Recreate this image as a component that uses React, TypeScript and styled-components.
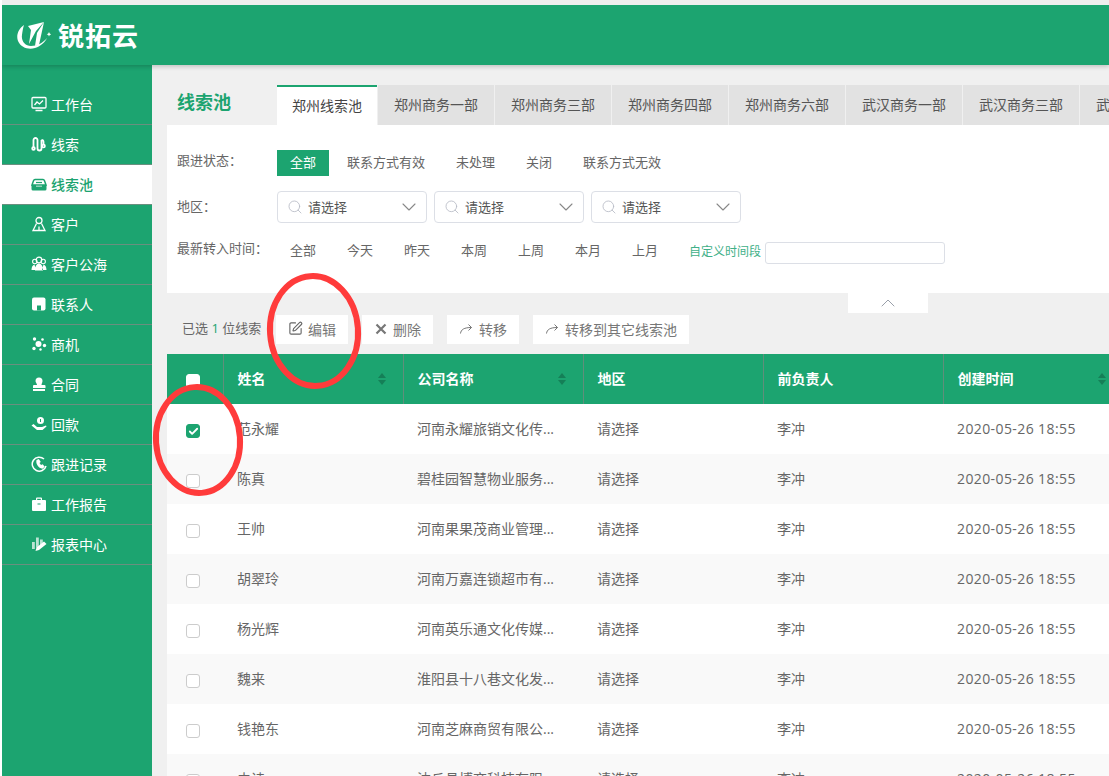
import React from "react";
import styled, { createGlobalStyle } from "styled-components";
import { Search, ChevronDown, ChevronUp, SquarePen, Check } from "lucide-react";

const GREEN = "#1ca470";
const FONT = `"Open Sans", "Noto Sans CJK SC", sans-serif`;

const GlobalStyle = createGlobalStyle`
    html, body {
        margin: 0;
        padding: 0;
        height: 100%;
        overflow: hidden;
        background: #fff;
    }
    body {
        font-family: ${FONT};
        font-size: 14px;
        color: #666;
    }
    * {
        box-sizing: border-box;
    }
`;

const TopStrip = styled.div`
    height: 5px;
    margin-left: 2px;
    background: #eeeeee;
`;

const Page = styled.div`
    position: relative;
    width: 1107px;
    height: 771px;
    margin-left: 2px;
    display: flex;
    flex-direction: column;
    overflow: hidden;
`;

const Header = styled.header`
    flex: 0 0 60px;
    display: flex;
    align-items: center;
    padding-left: 15px;
    background: ${GREEN};
    box-shadow: 0 2px 4px rgba(0, 0, 0, 0.18);
    position: relative;
    z-index: 2;
`;

const LogoText = styled.span`
    margin-left: 7px;
    font-family: "Noto Sans CJK SC", sans-serif;
    font-size: 26px;
    font-weight: 700;
    letter-spacing: 1px;
    line-height: 30px;
    color: #fff;
`;

const Body = styled.div`
    flex: 1;
    display: flex;
    min-height: 0;
`;

const Sidebar = styled.nav`
    flex: 0 0 150px;
    padding-top: 20px;
    background: ${GREEN};
`;

const NavItem = styled.div<{ $active?: boolean }>`
    height: 40px;
    display: flex;
    align-items: center;
    gap: 4px;
    padding: 0 0 2px 29px;
    border-bottom: 1px solid #6a8f7f;
    font-size: 14px;
    color: ${(p) => (p.$active ? GREEN : "#fff")};
    background: ${(p) => (p.$active ? "#fff" : "transparent")};
    font-weight: ${(p) => (p.$active ? 500 : 400)};

    svg {
        flex: 0 0 16px;
    }
`;

const Main = styled.main`
    flex: 1;
    min-width: 0;
    padding: 20px 0 0 15px;
    background: #f0f0f0;
    overflow: hidden;
`;

const TitleRow = styled.div`
    height: 40px;
    display: flex;
`;

const Title = styled.h1`
    flex: 0 0 110px;
    margin: 0;
    padding-left: 10px;
    font-size: 18px;
    font-weight: 700;
    line-height: 34px;
    color: ${GREEN};
`;

const Tabs = styled.div`
    display: flex;
    gap: 1px;
    overflow: hidden;
    flex: 1;
`;

const Tab = styled.div<{ $active?: boolean }>`
    flex: 0 0 ${(p) => (p.$active ? "100px" : "116px")};
    text-align: center;
    white-space: nowrap;
    font-size: 14px;
    line-height: ${(p) => (p.$active ? "38px" : "40px")};
    color: ${(p) => (p.$active ? "#444" : "#555")};
    background: ${(p) => (p.$active ? "#fff" : "#e2e2e2")};
    border-top: ${(p) => (p.$active ? `2px solid ${GREEN}` : "none")};
`;

const FilterPanel = styled.section`
    height: 168px;
    padding: 25px 10px 0;
    background: #fff;
`;

const FilterRow = styled.div<{ $gap: number }>`
    display: flex;
    align-items: flex-start;
    margin-bottom: ${(p) => p.$gap}px;
`;

const FilterLabel = styled.div<{ $lh: number }>`
    flex: 0 0 100px;
    font-size: 13px;
    line-height: ${(p) => p.$lh - 2}px;
    color: #666;
    white-space: nowrap;
`;

const Options = styled.div`
    display: flex;
    gap: 5px;
`;

const Option = styled.div<{ $active?: boolean; $h: number }>`
    padding: 0 13px;
    height: ${(p) => p.$h}px;
    line-height: ${(p) => p.$h - 2}px;
    font-size: 13px;
    white-space: nowrap;
    color: ${(p) => (p.$active ? "#fff" : "#666")};
    background: ${(p) => (p.$active ? GREEN : "transparent")};
`;

const Selects = styled.div`
    display: flex;
    gap: 7px;
`;

const SelectBox = styled.div`
    width: 150px;
    height: 32px;
    display: flex;
    align-items: center;
    padding: 0 5px 0 9px;
    border: 1px solid #dcdfe6;
    border-radius: 4px;
    font-size: 13px;
    color: #555;

    span {
        flex: 1;
        margin: 0 0 2px 5px;
    }
`;

const CustomLabel = styled.span`
    margin-left: 18px;
    font-size: 12px;
    line-height: 20px;
    color: #3fb088;
    white-space: nowrap;
`;

const CustomInput = styled.div`
    width: 180px;
    height: 22px;
    margin-left: 4px;
    border: 1px solid #dcdfe6;
    border-radius: 3px;
    background: #fff;
`;

const CollapseTab = styled.div`
    width: 80px;
    height: 20px;
    margin-left: 681px;
    display: flex;
    align-items: center;
    justify-content: center;
    background: #fff;
`;

const Toolbar = styled.div`
    height: 29px;
    margin: 2px 0 10px;
    padding-left: 15px;
    display: flex;
    align-items: center;
    font-size: 13px;
    color: #666;

    em {
        font-style: normal;
        color: ${GREEN};
    }
`;

const SelectedInfo = styled.span`
    width: 94px;
    white-space: nowrap;
    margin-top: -5px;
`;

const ToolButtons = styled.div`
    display: flex;
    gap: 14px;
`;

const ToolButton = styled.div`
    height: 29px;
    display: flex;
    align-items: center;
    gap: 5px;
    padding: 0 12px 2px 12px;
    background: #fff;
    font-size: 14px;
    color: #777;
    white-space: nowrap;
`;

const Table = styled.table`
    width: 956px;
    table-layout: fixed;
    border-collapse: collapse;
`;

const HeadCell = styled.th`
    height: 50px;
    padding: 0 14px 2px;
    background: ${GREEN};
    border-left: 1px solid #5f8f7b;
    text-align: left;
    font-size: 14px;
    font-weight: 700;
    color: #fff;

    &:first-child {
        border-left: none;
    }
`;

const HeadInner = styled.div`
    display: flex;
    align-items: center;
    justify-content: space-between;
    padding-right: 3px;
`;

const SortMark = styled.i`
    display: flex;
    flex-direction: column;
    gap: 2px;
    margin-top: 2px;

    &::before,
    &::after {
        content: "";
        width: 0;
        height: 0;
        border-left: 4px solid transparent;
        border-right: 4px solid transparent;
    }
    &::before {
        border-bottom: 5px solid #157f57;
    }
    &::after {
        border-top: 5px solid #157f57;
    }
`;

const Row = styled.tr<{ $odd: boolean }>`
    background: ${(p) => (p.$odd ? "#fff" : "#f9f9f9")};
`;

const Cell = styled.td`
    height: 50px;
    padding: 0 14px 2px;
    font-size: 14px;
    color: #666;
    white-space: nowrap;
    overflow: hidden;
`;

const DateCell = styled(Cell)`
    letter-spacing: 0.4px;
`;

const CheckCell = styled(Cell)`
    padding: 4px 0 0 19px;
`;

const CheckBox = styled.span<{ $checked?: boolean; $head?: boolean }>`
    width: 14px;
    height: 14px;
    display: flex;
    align-items: center;
    justify-content: center;
    border-radius: 3px;
    border: 1px solid ${(p) => (p.$checked ? GREEN : p.$head ? "#fff" : "#ccc")};
    background: ${(p) => (p.$checked ? GREEN : "#fff")};
`;

const HeadCheck = styled(CheckBox)`
    margin: 5px 0 0 5px;
`;

const Circle = styled.svg`
    position: absolute;
    left: -2px;
    top: -5px;
    width: 1109px;
    height: 776px;
    pointer-events: none;
    z-index: 3;
`;

const icons: Record<string, React.ReactNode> = {
    monitor: (
        <g fill="none" stroke="currentColor" strokeWidth="1.3">
            <rect x="1" y="1.500" width="14" height="10.500" rx="1" />
            <path d="M3.500 9l2.500-3 2.500 2 3.500-3.500M4.500 14.500h7" />
        </g>
    ),
    clue: (
        <g fill="none" stroke="currentColor" strokeWidth="1.800">
            <path d="M2.500 11V4a2 2 0 0 1 4 0v8.500a2 2 0 0 0 4 0V4" />
            <circle cx="2.500" cy="12.500" r="1.300" />
            <circle cx="12.500" cy="10" r="1.400" />
            <path d="M10.500 4a2 2 0 0 1 2 2v2.500" />
        </g>
    ),
    pool: (
        <g>
            <path d="M4 3.500h8a1.500 1.500 0 0 1 1.400 1L15 9H1l1.600-4.500A1.500 1.500 0 0 1 4 3.500z" fill="none" stroke="currentColor" strokeWidth="1.500" />
            <path d="M.5 9h4.500v1.500h6V9h4.500v4a1.500 1.500 0 0 1-1.500 1.500H2A1.500 1.500 0 0 1 .5 13z" fill="currentColor" />
            <path d="M5 6.500h6" stroke="currentColor" strokeWidth="1.200" />
        </g>
    ),
    customer: (
        <g fill="none" stroke="currentColor" strokeWidth="1.300">
            <circle cx="8" cy="4.500" r="3" />
            <path d="M5.500 7.500L2 14.500h12l-3.500-7M8 10.500v4" />
        </g>
    ),
    pub: (
        <g>
            <circle cx="3.800" cy="5.500" r="2.200" fill="none" stroke="currentColor" strokeWidth="1.100" />
            <circle cx="12.200" cy="5.500" r="2.200" fill="none" stroke="currentColor" strokeWidth="1.100" />
            <circle cx="8" cy="4" r="2.800" fill="none" stroke="currentColor" strokeWidth="1.200" />
            <path d="M.5 14c0-3 1.200-5 3-5.500L5 14zM15.500 14c0-3-1.200-5-3-5.500L11 14zM4 14.500c0-4 1.500-7 4-7s4 3 4 7z" fill="currentColor" />
        </g>
    ),
    contact: (
        <g>
            <rect x="1" y="1.500" width="13.500" height="13" rx="2" fill="currentColor" />
            <rect x="6" y="9.500" width="4" height="5" fill={GREEN} />
        </g>
    ),
    chance: (
        <g fill="currentColor">
            <circle cx="7.500" cy="8" r="3" />
            <circle cx="3.500" cy="3" r="1.700" />
            <circle cx="11.500" cy="3.500" r="1.300" />
            <circle cx="3" cy="12.500" r="1.700" />
            <circle cx="13.500" cy="9.500" r="1.700" />
            <circle cx="9.500" cy="13.500" r="1.200" />
        </g>
    ),
    contract: (
        <g fill="currentColor">
            <path d="M4.500 5a3.500 3.500 0 0 1 7 0c0 1.500-1 2.500-1 4h3a1 1 0 0 1 1 1v2H2v-2a1 1 0 0 1 1-1h3c0-1.500-1.500-2.500-1.500-4z" />
            <rect x="2" y="13" width="12" height="2" />
        </g>
    ),
    payment: (
        <g>
            <circle cx="9.500" cy="4.500" r="3.500" fill="currentColor" />
            <path d="M.5 9.500l2-1.500 3.500 3h5l4-1.500.5 1-4 3.500H6z" fill="currentColor" />
            <path d="M9.500 3v3" stroke={GREEN} strokeWidth="1" />
        </g>
    ),
    record: (
        <g>
            <path d="M13 3A7 7 0 1 0 15 10" fill="none" stroke="currentColor" strokeWidth="1.500" />
            <path d="M5.500 4l2.300-1 2 3-1.300 1 1.500 2 1.700-.7 2 2.500-2.300 2C7.500 12 4.500 8 5.500 4z" fill="currentColor" />
        </g>
    ),
    report: (
        <g fill="currentColor">
            <path d="M5 4V2.500A1 1 0 0 1 6 1.500h4a1 1 0 0 1 1 1V4h-1.200V2.800H6.200V4z" />
            <rect x="1" y="4" width="14" height="11" rx="1" />
            <rect x="6.500" y="7.500" width="3" height="1" fill={GREEN} />
        </g>
    ),
    charts: (
        <g fill="currentColor">
            <rect x="1" y="6" width="2.800" height="7" opacity=".7" />
            <rect x="5" y="1.500" width="2.800" height="10" opacity=".7" />
            <rect x="9" y="3.500" width="2.800" height="7" opacity=".7" />
            <path d="M4.500 15l1-3.500 7.500-6 2.500 2.500-7.500 6z" />
        </g>
    ),
};

const navs = [
    ["monitor", "工作台"],
    ["clue", "线索"],
    ["pool", "线索池"],
    ["customer", "客户"],
    ["pub", "客户公海"],
    ["contact", "联系人"],
    ["chance", "商机"],
    ["contract", "合同"],
    ["payment", "回款"],
    ["record", "跟进记录"],
    ["report", "工作报告"],
    ["charts", "报表中心"],
];

const tabs = ["郑州商务一部", "郑州商务三部", "郑州商务四部", "郑州商务六部", "武汉商务一部", "武汉商务三部", "武汉商务四部"];
const statusOptions = ["全部", "联系方式有效", "未处理", "关闭", "联系方式无效"];
const timeOptions = ["全部", "今天", "昨天", "本周", "上周", "本月", "上月"];

const rows = [
    ["范永耀", "河南永耀旅销文化传..."],
    ["陈真", "碧桂园智慧物业服务..."],
    ["王帅", "河南果果茂商业管理..."],
    ["胡翠玲", "河南万嘉连锁超市有..."],
    ["杨光辉", "河南英乐通文化传媒..."],
    ["魏来", "淮阳县十八巷文化发..."],
    ["钱艳东", "河南芝麻商贸有限公..."],
    ["史诗", "沈丘县博商科技有限..."],
];

const ShareArrow = () => (
    <svg width="15" height="14" viewBox="0 0 15 14" fill="none" stroke="#777" strokeWidth="1">
        <path d="M1.500 11.500C2 7.500 5 5.500 12.500 5.500M9.500 2.500l3 3-3 3" />
    </svg>
);

const DeleteMark = () => (
    <svg width="14" height="14" viewBox="0 0 14 14" fill="none" stroke="#777" strokeWidth="2.200">
        <path d="M2.500 2.500l9 9M11.500 2.500l-9 9" />
    </svg>
);

const Logo = () => (
    <svg width="34" height="28" viewBox="0 0 34 28" fill="#fff">
        <path d="M7 4C1 8-1 15 1 20c3 7 11 9 17 7 6-2 10-6 12-10-4 5-10 8-16 8-6 0-10-5-9-11 .5-4 1-7 2-10z" />
        <path d="M27 1L11 5l3 4-2 14 7-13z" />
        <path d="M27 1l-7 11-2 13 4-1z" />
        <path d="M32 11l.7 1.600 1.600.7-1.600.7-.7 1.600-.7-1.600-1.600-.7 1.600-.7z" />
    </svg>
);

const App = () => {
    return (
        <>
            <GlobalStyle />
            <TopStrip />
            <Page>
                <Header>
                    <Logo />
                    <LogoText>锐拓云</LogoText>
                </Header>
                <Body>
                    <Sidebar>
                        {navs.map(([icon, label]) => (
                            <NavItem key={label} $active={label === "线索池"}>
                                <svg width="16" height="16" viewBox="0 0 16 16">{icons[icon]}</svg>
                                {label}
                            </NavItem>
                        ))}
                    </Sidebar>
                    <Main>
                        <TitleRow>
                            <Title>线索池</Title>
                            <Tabs>
                                <Tab $active>郑州线索池</Tab>
                                {tabs.map((t) => (
                                    <Tab key={t}>{t}</Tab>
                                ))}
                            </Tabs>
                        </TitleRow>
                        <FilterPanel>
                            <FilterRow $gap={15}>
                                <FilterLabel $lh={22}>跟进状态：</FilterLabel>
                                <Options>
                                    {statusOptions.map((o, i) => (
                                        <Option key={o} $h={26} $active={i === 0}>{o}</Option>
                                    ))}
                                </Options>
                            </FilterRow>
                            <FilterRow $gap={19}>
                                <FilterLabel $lh={32}>地区：</FilterLabel>
                                <Selects>
                                    {[0, 1, 2].map((n) => (
                                        <SelectBox key={n}>
                                            <Search size={16} color="#b8bcc6" strokeWidth={1.3} />
                                            <span>请选择</span>
                                            <ChevronDown size={24} color="#888" strokeWidth={1.1} />
                                        </SelectBox>
                                    ))}
                                </Selects>
                            </FilterRow>
                            <FilterRow $gap={0}>
                                <FilterLabel $lh={14}>最新转入时间：</FilterLabel>
                                <Options>
                                    {timeOptions.map((o) => (
                                        <Option key={o} $h={18}>{o}</Option>
                                    ))}
                                </Options>
                                <CustomLabel>自定义时间段</CustomLabel>
                                <CustomInput />
                            </FilterRow>
                        </FilterPanel>
                        <CollapseTab>
                            <ChevronUp size={24} color="#9aa0aa" strokeWidth={1} />
                        </CollapseTab>
                        <Toolbar>
                            <SelectedInfo>已选 <em>1</em> 位线索</SelectedInfo>
                            <ToolButtons>
                                <ToolButton><SquarePen size={15} strokeWidth={1.8} color="#666" />编辑</ToolButton>
                                <ToolButton><DeleteMark />删除</ToolButton>
                                <ToolButton><ShareArrow />转移</ToolButton>
                                <ToolButton><ShareArrow />转移到其它线索池</ToolButton>
                            </ToolButtons>
                        </Toolbar>
                        <Table>
                            <colgroup>
                                <col width="56" />
                                <col width="180" />
                                <col width="180" />
                                <col width="180" />
                                <col width="180" />
                                <col width="180" />
                            </colgroup>
                            <thead>
                                <tr>
                                    <HeadCell><HeadCheck $head /></HeadCell>
                                    <HeadCell><HeadInner>姓名<SortMark /></HeadInner></HeadCell>
                                    <HeadCell><HeadInner>公司名称<SortMark /></HeadInner></HeadCell>
                                    <HeadCell>地区</HeadCell>
                                    <HeadCell>前负责人</HeadCell>
                                    <HeadCell><HeadInner>创建时间<SortMark /></HeadInner></HeadCell>
                                </tr>
                            </thead>
                            <tbody>
                                {rows.map(([name, company], i) => (
                                    <Row key={name} $odd={i % 2 === 0}>
                                        <CheckCell>
                                            <CheckBox $checked={i === 0}>
                                                {i === 0 && <Check size={11} color="#fff" strokeWidth={4} />}
                                            </CheckBox>
                                        </CheckCell>
                                        <Cell>{name}</Cell>
                                        <Cell>{company}</Cell>
                                        <Cell>请选择</Cell>
                                        <Cell>李冲</Cell>
                                        <DateCell>2020-05-26 18:55</DateCell>
                                    </Row>
                                ))}
                            </tbody>
                        </Table>
                    </Main>
                </Body>
                <Circle viewBox="0 0 1109 776">
                    <ellipse cx="314" cy="331" rx="44" ry="55" fill="none" stroke="#ff3b3b" strokeWidth="6" transform="rotate(-4 314 331)" />
                    <ellipse cx="198" cy="440" rx="42" ry="53" fill="none" stroke="#ff3b3b" strokeWidth="6" transform="rotate(-4 198 440)" />
                </Circle>
            </Page>
        </>
    );
};

export default App;
